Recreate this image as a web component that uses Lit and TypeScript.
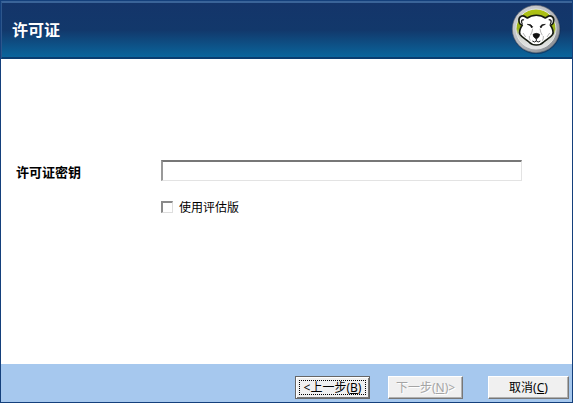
import { LitElement, html, css } from "lit";
import { customElement } from "lit/decorators.js";

@customElement("bear-logo")
class BearLogo extends LitElement {
  static styles = css`
    :host { display: block; width: 50px; height: 50px; }
    svg { display: block; }
  `;
  render() {
    return html`
      <svg width="50" height="50" viewBox="33 12 150 150" role="img" aria-label="Polar bear logo">
        <defs>
          <linearGradient id="ring" x1="0" y1="0" x2="1" y2="1">
            <stop offset="0" stop-color="#d2d4d8" />
            <stop offset=".5" stop-color="#b9bbbf" />
            <stop offset="1" stop-color="#7d8188" />
          </linearGradient>
          <linearGradient id="disc" x1="0" y1="0" x2="0" y2="1">
            <stop offset="0" stop-color="#b0c414" />
            <stop offset=".5" stop-color="#98b016" />
            <stop offset=".64" stop-color="#d0d3cc" />
            <stop offset="1" stop-color="#e6e7ea" />
          </linearGradient>
        </defs>
        <circle cx="109" cy="89" r="73" fill="#0d2850" opacity=".6" />
        <circle cx="108" cy="87" r="71" fill="url(#ring)" stroke="#6c7179" stroke-width="2" />
        <circle cx="108" cy="87" r="60" fill="url(#disc)" stroke="#e4e6e4" stroke-width="3" />
        <path d="M77 51C66 43 55 51 57 63C58 71 63 75 67 75C61 84 56 94 60 103C66 113 78 118 87 126C98 138 120 138 131 126C140 118 152 113 158 103C162 94 157 84 151 75C155 75 160 71 161 63C163 51 152 43 141 51L136 54C122 43 96 43 82 54Z"
          fill="#fff" stroke="#171c12" stroke-width="5" stroke-linejoin="round" />
        <path d="M67 72C62 64 65 57 72 60M151 72C156 64 153 57 146 60" fill="none" stroke="#222" stroke-width="4" />
        <path d="M82 73Q94 72 98 80L95 84L91 77ZM136 73Q124 72 120 80L123 84L127 77Z" fill="#111" stroke="#111" stroke-width="2" />
        <path d="M99 103Q109 97 119 103Q119 112 109 117Q99 112 99 103Z" fill="#111" stroke="#111" stroke-width="2" />
        <path d="M109 116V123M97 123Q104 129 109 123Q114 129 121 123" fill="none" stroke="#222" stroke-width="3" />
        <path d="M98 86Q97 97 91 106M120 86Q121 97 127 106M69 99L77 111M149 99L141 111M88 108Q87 116 91 122M130 108Q131 116 127 122" fill="none" stroke="#8c8c8c" stroke-width="2" />
      </svg>
    `;
  }
}

@customElement("app-root")
class AppRoot extends LitElement {
  static styles = css`
    :host {
      display: flex;
      flex-direction: column;
      box-sizing: border-box;
      min-height: 100vh;
      border: 1px solid #14407c;
      background: #fff;
      color: #000;
      font: 12px/16px "Noto Sans", "Noto Sans CJK SC", sans-serif;
    }
    header {
      display: flex;
      align-items: center;
      justify-content: space-between;
      box-sizing: border-box;
      height: 58px;
      padding: 0 11px 2px 10px;
      border-top: 2px solid #3a6499;
      border-left: 1px solid #2d568c;
      border-bottom: 2px solid #0a3d70;
      background: linear-gradient(#14356a, #12386b 50%, #0a659c);
    }
    h1 {
      margin: 0;
      color: #fff;
      font: bold 16px/24px "Noto Sans CJK SC", sans-serif;
    }
    main {
      flex: 1;
      display: grid;
      grid-template-columns: 145px 1fr;
      align-content: start;
      row-gap: 18px;
      padding: 101px 50px 0 15px;
    }
    .label {
      align-self: center;
      padding-top: 2px;
      font: bold 13px/18px "Noto Sans CJK SC", sans-serif;
    }
    .key {
      box-sizing: border-box;
      width: 100%;
      height: 21px;
      margin: 0;
      padding: 0 3px;
      border: 1px solid #e3e3e3;
      border-top: 2px solid #777;
      border-left: 2px solid #999;
      border-radius: 0;
      outline: none;
      background: #fff;
      font: inherit;
    }
    .option {
      grid-column: 2;
      display: flex;
      align-items: center;
      gap: 6px;
      font-family: "Noto Sans CJK SC", sans-serif;
    }
    .check {
      appearance: none;
      box-sizing: border-box;
      width: 12px;
      height: 12px;
      margin: 0;
      border: 1px solid #dedede;
      border-top: 2px solid #8a8a8a;
      border-left: 2px solid #8a8a8a;
      background: #fff;
    }
    .check:checked { background: #333; background-clip: content-box; padding: 2px; }
    footer {
      display: flex;
      justify-content: flex-end;
      padding: 12px 3px 3px;
      background: #a6c8ee;
    }
    button {
      box-sizing: border-box;
      width: 75px;
      height: 23px;
      padding: 0;
      border: 1px solid;
      border-color: #fff #777 #777 #fff;
      border-radius: 0;
      background: #f0f0f0;
      box-shadow: inset -1px -1px #b0b0b0;
      color: #000;
      font: inherit;
      white-space: nowrap;
    }
    .back {
      border-color: #666;
      box-shadow: inset 1px 1px #fff, inset -1px -1px #777;
      outline: 1px dotted #000;
      outline-offset: -5px;
    }
    .next { margin-left: 18px; }
    .next:disabled { color: #a4a4a4; text-shadow: 1px 1px #fff; }
    .cancel { width: 81px; margin-left: 25px; }
  `;
  render() {
    return html`
      <header>
        <h1>许可证</h1>
        <bear-logo></bear-logo>
      </header>
      <main>
        <label class="label" for="key">许可证密钥</label>
        <input class="key" id="key" type="text" />
        <label class="option"><input class="check" type="checkbox" />使用评估版</label>
      </main>
      <footer>
        <button class="back" type="button">&lt;上一步(<u>B</u>)</button>
        <button class="next" type="button" disabled>下一步(<u>N</u>)&gt;</button>
        <button class="cancel" type="button">取消(<u>C</u>)</button>
      </footer>
    `;
  }
}
